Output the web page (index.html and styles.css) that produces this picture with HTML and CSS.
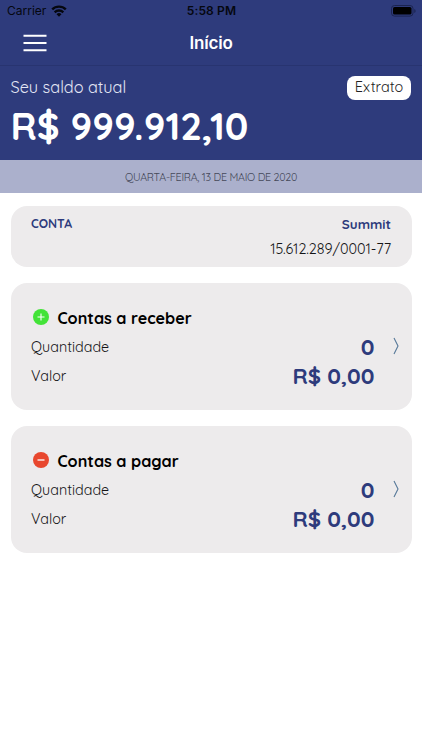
FILE: index.html
```html
<!DOCTYPE html>
<html lang="pt-BR">
<head>
<meta charset="utf-8">
<title>Início</title>
<link rel="stylesheet" href="styles.css">
</head>
<body>
<header class="top">
  <div class="status">
    <div class="carrier"><span>Carrier</span>
      <svg width="16" height="12" viewBox="0 0 16 12" fill="none" stroke="#05070f" stroke-width="2.4"><path d="M1.2 4.4a9.7 9.7 0 0 1 13.6 0"/><path d="M3.7 7.3a6.1 6.1 0 0 1 8.6 0"/><path d="M8 11.8 5.5 9.3a3.5 3.5 0 0 1 5 0z" fill="#05070f" stroke="none"/></svg>
    </div>
    <div class="clock">5:58 PM</div>
    <svg class="battery" width="25" height="12" viewBox="0 0 25 12"><rect x=".5" y=".5" width="21.5" height="10.6" rx="3" fill="none" stroke="#1b2450"/><rect x="2" y="2" width="18.5" height="7.6" rx="1.6" fill="#000"/><path d="M23.3 4v4q1.3-.6 1.3-2t-1.3-2z" fill="#1b2450"/></svg>
  </div>
  <nav class="nav">
    <svg class="menu" width="24" height="18" viewBox="0 0 24 18" stroke="#fff" stroke-width="2"><path d="M.5 1.7h23M.5 9h23M.5 16.3h23"/></svg>
    <h1 class="title">Início</h1>
  </nav>
</header>
<section class="balance">
  <div class="balance-row"><span class="balance-label">Seu saldo atual</span><span class="button">Extrato</span></div>
  <div class="amount">R$ 999.912,10</div>
</section>
<div class="date"><span>QUARTA-FEIRA, 13 DE MAIO DE 2020</span></div>
<main class="cards">
  <section class="card account">
    <div class="row"><span class="account-label">CONTA</span><span class="account-name">Summit</span></div>
    <div class="account-number">15.612.289/0001-77</div>
  </section>
  <section class="card bills">
    <div class="heading">
      <svg width="16" height="16" viewBox="0 0 16 16"><circle cx="8" cy="8" r="8" fill="#43e338"/><path d="M4.5 8h7M8 4.5v7" stroke="#fff" stroke-width="1.1"/></svg>
      <h2>Contas a receber</h2>
    </div>
    <div class="row line"><span>Quantidade</span><span class="value">0</span></div>
    <div class="row line"><span>Valor</span><span class="value">R$ 0,00</span></div>
    <svg class="chevron" width="6" height="18" viewBox="0 0 6 18" fill="none" stroke="#567898" stroke-width="1.1"><path d="M1 1l4 8-4 8"/></svg>
  </section>
  <section class="card bills">
    <div class="heading">
      <svg width="16" height="16" viewBox="0 0 16 16"><circle cx="8" cy="8" r="8" fill="#e8472e"/><path d="M4.5 8h7" stroke="#fff" stroke-width="1.3"/></svg>
      <h2>Contas a pagar</h2>
    </div>
    <div class="row line"><span>Quantidade</span><span class="value">0</span></div>
    <div class="row line"><span>Valor</span><span class="value">R$ 0,00</span></div>
    <svg class="chevron" width="6" height="18" viewBox="0 0 6 18" fill="none" stroke="#567898" stroke-width="1.1"><path d="M1 1l4 8-4 8"/></svg>
  </section>
</main>
</body>
</html>
```
FILE: styles.css
```css
* { box-sizing: border-box; }
body { margin: 0; height: 750px; background: #fff; color: #151517; font-family: Quicksand, Inter, sans-serif; white-space: nowrap; }
h1, h2 { margin: 0; }
svg { display: block; flex: none; }
.top { height: 66px; background: #2e3b7c; border-bottom: 1px solid #283470; }
.status { display: grid; grid-template-columns: 1fr auto 1fr; align-items: center; height: 21px; padding: 0 6px 0 7px; font-family: Inter, sans-serif; color: #05070f; }
.carrier { display: flex; align-items: center; gap: 5px; font-size: 12px; }
.clock { font-size: 12px; font-weight: 600; letter-spacing: .15px; }
.battery { justify-self: end; }
.nav { display: grid; grid-template-columns: 1fr auto 1fr; align-items: center; height: 43px; padding: 0 23px; }
.title { grid-column: 2; font: 600 17px/22px Inter, sans-serif; color: #fff; letter-spacing: -.2px; }
.balance { height: 94px; background: #2e3b7c; padding: 10px 11px 0 10.5px; color: #fff; }
.balance-row { display: flex; justify-content: space-between; align-items: flex-start; height: 25px; }
.balance-label { font-size: 16.3px; font-weight: 400; line-height: 22px; color: #e3e6f5; }
.button { width: 64px; height: 24px; border-radius: 8px; background: #fff; color: #222; font-size: 14.4px; font-weight: 400; line-height: 23px; text-align: center; }
.amount { font-size: 38.3px; font-weight: 700; line-height: 51px; }
.date { display: flex; justify-content: center; height: 33px; background: #abb0cc; color: #454859; font-size: 10.7px; letter-spacing: -.26px; line-height: 34px; }
.cards { display: flex; flex-direction: column; gap: 16px; padding: 13px 10.5px 0; }
.card { position: relative; border-radius: 16px; background: #edebec; }
.row { display: flex; justify-content: space-between; align-items: center; }
.account { height: 61px; padding: 8px 20.5px 0 20.5px; }
.account .row { height: 19px; }
.account-label { color: #2e3b7c; font-size: 12.3px; font-weight: 700; line-height: 16px; }
.account-name { color: #2e3b7c; font-size: 13.4px; font-weight: 700; }
.account-number { margin-top: 6px; text-align: right; font-size: 14.4px; font-weight: 400; letter-spacing: -.05px; line-height: 20px; }
.bills { height: 127px; padding: 23px 37px 0 20.5px; }
.heading { display: flex; align-items: center; gap: 8.5px; height: 26px; padding-left: 2px; }
.heading svg { margin-top: -4px; }
.heading h2 { margin-top: -2px; color: #000; font-size: 16.15px; font-weight: 700; line-height: 26px; }
.line { height: 29px; font-size: 14.3px; font-weight: 400; }
.value { color: #2e3b7c; font-size: 22.3px; font-weight: 700; }
.chevron { position: absolute; right: 12.5px; top: 54px; }
```
